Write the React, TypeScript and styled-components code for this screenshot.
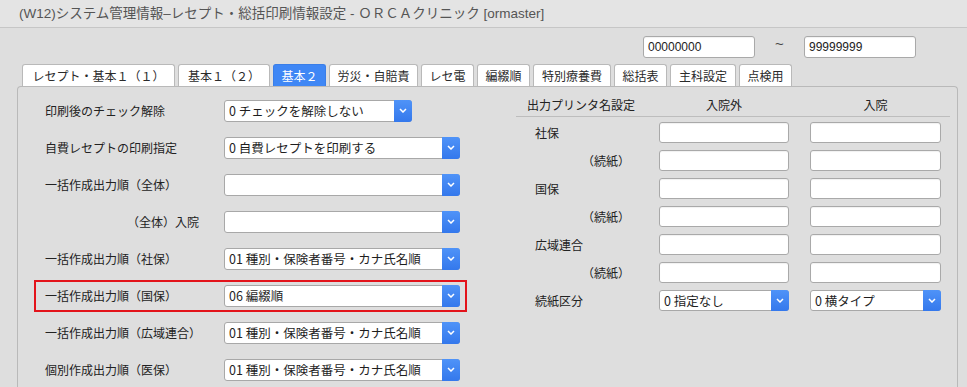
import React from 'react';
import styled, { createGlobalStyle } from 'styled-components';

const GlobalStyle = createGlobalStyle`
  html, body { margin: 0; padding: 0; background: #dedede; }
  body { font-family: "Liberation Sans", "Noto Sans CJK JP", sans-serif; color: #333; overflow: hidden; }
  * { box-sizing: border-box; }
`;

const Page = styled.div`
  width: 967px;
  height: 387px;
  overflow: hidden;
  display: flex;
  flex-direction: column;
`;

const TitleBar = styled.div`
  height: 28px;
  flex: none;
  border-bottom: 1px solid #c6c6c6;
  background: #e4e4e4;
  padding-left: 19px;
  font-family: "Liberation Sans", "Noto Sans CJK JP", sans-serif;
  font-size: 13.5px;
  line-height: 27px;
  color: #555;
  white-space: nowrap;
`;

const RangeRow = styled.div`
  display: flex;
  align-items: center;
  flex: none;
  margin-top: 8px;
  padding-left: 643px;
  height: 22px;
`;

const TextBox = styled.div<{ $w: number }>`
  width: ${p => p.$w}px;
  height: 100%;
  background: #fff;
  border: 1px solid #a9a9a9;
  border-radius: 3px;
  box-shadow: inset 0 1px 1px rgba(0,0,0,0.06);
  padding-left: 4px;
  font-family: "Liberation Sans", sans-serif;
  font-size: 12px;
  line-height: 20px;
  color: #222;
`;

const Tilde = styled.div`
  width: 49px;
  text-align: center;
  font-family: "Liberation Sans", sans-serif;
  font-size: 15px;
  color: #444;
  padding-bottom: 7px;
`;

const TabRow = styled.div`
  display: flex;
  gap: 3px;
  flex: none;
  margin-top: 6px;
  padding-left: 22px;
  height: 22px;
`;

const Tab = styled.div<{ $active?: boolean; $w: number }>`
  width: ${p => p.$w}px;
  height: 22px;
  border: 1px solid ${p => (p.$active ? '#3a7ee8' : '#b9b9b9')};
  border-bottom: none;
  border-radius: 3px 3px 0 0;
  background: ${p => (p.$active ? '#3f87f5' : '#fff')};
  color: ${p => (p.$active ? '#fff' : '#2a2a2a')};
  font-family: "Noto Sans CJK JP", sans-serif;
  font-size: 12px;
  line-height: 21px;
  text-align: center;
  white-space: nowrap;
`;

const Panel = styled.div`
  flex: 1;
  margin-left: 17px;
  width: 941px;
  border: 1px solid #b9b9b9;
  border-bottom: none;
  border-radius: 4px 4px 0 0;
  display: grid;
  grid-template-columns: 498px 1fr;
  align-items: start;
  padding-top: 5px;
`;

const LeftColumn = styled.div`
  padding-left: 27px;
  display: flex;
  flex-direction: column;
`;

const FormRow = styled.div<{ $highlight?: boolean }>`
  position: relative;
  height: 37px;
  display: grid;
  grid-template-columns: 179px auto;
  align-items: center;
  &::after {
    content: '';
    display: ${p => (p.$highlight ? 'block' : 'none')};
    position: absolute;
    left: -11px;
    right: 49px;
    top: 3px;
    bottom: 2px;
    border: 2px solid #e3131b;
    pointer-events: none;
  }
`;

const Label = styled.div<{ $indent?: number }>`
  padding-left: ${p => p.$indent ?? 0}px;
  font-family: "Noto Sans CJK JP", sans-serif;
  font-size: 12px;
  color: #222;
  white-space: nowrap;
`;

const SelectBox = styled.div<{ $w: number; $h?: number }>`
  width: ${p => p.$w}px;
  height: ${p => p.$h ?? 22}px;
  display: flex;
  background: #fff;
  border: 1px solid #a8a8a8;
  border-radius: 3px;
`;

const SelectValue = styled.div`
  flex: 1;
  padding-left: 4px;
  font-family: "Noto Sans CJK JP", sans-serif;
  font-size: 12.5px;
  line-height: 20px;
  color: #1e1e1e;
  white-space: nowrap;
  overflow: hidden;
`;

const ArrowButton = styled.div`
  width: 18px;
  margin: -1px -1px -1px 0;
  border-radius: 0 3px 3px 0;
  background: linear-gradient(#4f93f8, #3478ec);
  display: flex;
  align-items: center;
  justify-content: center;
`;

const RightColumn = styled.div`
  width: 434px;
`;

const HeaderRow = styled.div`
  height: 25px;
  display: grid;
  grid-template-columns: 122px 130px 131px;
  column-gap: 21px;
  align-items: center;
  border-bottom: 1px solid #bdbdbd;
`;

const HeaderCell = styled.div<{ $center?: boolean }>`
  padding-left: ${p => (p.$center ? 0 : 11)}px;
  text-align: ${p => (p.$center ? 'center' : 'left')};
  font-family: "Noto Sans CJK JP", sans-serif;
  font-size: 12px;
  color: #222;
  white-space: nowrap;
`;

const PrinterGrid = styled.div`
  margin-top: 5px;
  display: grid;
  grid-template-columns: 122px 130px 131px;
  column-gap: 21px;
  row-gap: 7px;
  grid-auto-rows: 21px;
  align-items: center;
`;

const Chevron = () => (
  <svg width="8" height="5" viewBox="0 0 8 5">
    <polyline points="1,1 4,4 7,1" fill="none" stroke="#fff" strokeWidth="1.5" />
  </svg>
);

const Select = ({ w, h, value }: { w: number; h?: number; value: string }) => (
  <SelectBox $w={w} $h={h}>
    <SelectValue>{value}</SelectValue>
    <ArrowButton>
      <Chevron />
    </ArrowButton>
  </SelectBox>
);

const tabs: { label: string; w: number }[] = [
  { label: 'レセプト・基本１（１）', w: 153 },
  { label: '基本１（２）', w: 92 },
  { label: '基本２', w: 53 },
  { label: '労災・自賠責', w: 89 },
  { label: 'レセ電', w: 53 },
  { label: '編綴順', w: 53 },
  { label: '特別療養費', w: 78 },
  { label: '総括表', w: 53 },
  { label: '主科設定', w: 66 },
  { label: '点検用', w: 53 },
];

const leftRows: { label: string; value: string; indent?: number; w?: number; highlight?: boolean }[] = [
  { label: '印刷後のチェック解除', value: '0 チェックを解除しない', w: 188 },
  { label: '自費レセプトの印刷指定', value: '0 自費レセプトを印刷する' },
  { label: '一括作成出力順（全体）', value: '' },
  { label: '（全体）入院', value: '', indent: 82 },
  { label: '一括作成出力順（社保）', value: '01 種別・保険者番号・カナ氏名順' },
  { label: '一括作成出力順（国保）', value: '06 編綴順', highlight: true },
  { label: '一括作成出力順（広域連合）', value: '01 種別・保険者番号・カナ氏名順' },
  { label: '個別作成出力順（医保）', value: '01 種別・保険者番号・カナ氏名順' },
];

const printerRows: { label: string; indent: number }[] = [
  { label: '社保', indent: 19 },
  { label: '（続紙）', indent: 66 },
  { label: '国保', indent: 19 },
  { label: '（続紙）', indent: 66 },
  { label: '広域連合', indent: 19 },
  { label: '（続紙）', indent: 66 },
];

export default function App() {
  return (
    <Page>
      <GlobalStyle />
      <TitleBar>(W12)システム管理情報–レセプト・総括印刷情報設定 - ＯＲＣＡクリニック [ormaster]</TitleBar>
      <RangeRow>
        <TextBox $w={112}>00000000</TextBox>
        <Tilde>~</Tilde>
        <TextBox $w={112}>99999999</TextBox>
      </RangeRow>
      <TabRow>
        {tabs.map(t => (
          <Tab key={t.label} $w={t.w} $active={t.label === '基本２'}>
            {t.label}
          </Tab>
        ))}
      </TabRow>
      <Panel>
        <LeftColumn>
          {leftRows.map((r, i) => (
            <FormRow key={i} $highlight={r.highlight}>
              <Label $indent={r.indent}>{r.label}</Label>
              <Select w={r.w ?? 236} value={r.value} />
            </FormRow>
          ))}
        </LeftColumn>
        <RightColumn>
          <HeaderRow>
            <HeaderCell>出力プリンタ名設定</HeaderCell>
            <HeaderCell $center>入院外</HeaderCell>
            <HeaderCell $center>入院</HeaderCell>
          </HeaderRow>
          <PrinterGrid>
            {printerRows.map((r, i) => (
              <React.Fragment key={i}>
                <Label $indent={r.indent}>{r.label}</Label>
                <TextBox $w={130} />
                <TextBox $w={131} />
              </React.Fragment>
            ))}
            <Label $indent={19}>続紙区分</Label>
            <Select w={130} h={21} value="0 指定なし" />
            <Select w={131} h={21} value="0 横タイプ" />
          </PrinterGrid>
        </RightColumn>
      </Panel>
    </Page>
  );
}
